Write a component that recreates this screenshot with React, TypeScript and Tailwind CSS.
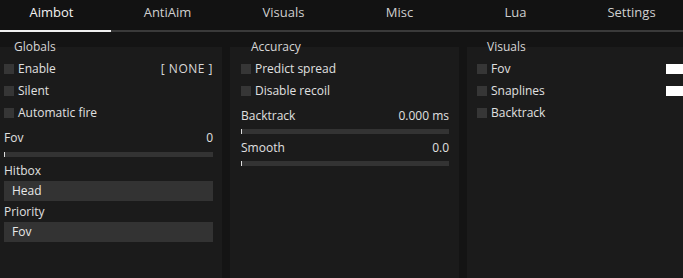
import React from "react";

const font = { fontFamily: '"Open Sans", "Noto Sans", sans-serif' };

function Check({ label, right }: { label: string; right?: React.ReactNode }) {
  return (
    <div className="flex h-[22px] items-center">
      <div className="h-[10px] w-[10px] bg-[#363636]" />
      <span className="ml-[4px] text-[12px] text-[#e0e0e0]">{label}</span>
      <div className="flex-1" />
      {right}
    </div>
  );
}

function Slider({ label, value, gap }: { label: string; value: string; gap: string }) {
  return (
    <div className="flex flex-col">
      <div className="flex h-[16px] items-center justify-between text-[12px] text-[#e0e0e0]">
        <span>{label}</span>
        <span>{value}</span>
      </div>
      <div className={"flex h-[5px] bg-[#333333] " + gap}>
        <div className="h-full w-[1px] bg-[#dcdcdc]" />
      </div>
    </div>
  );
}

function Combo({ label, value }: { label: string; value: string }) {
  return (
    <div className="flex flex-col">
      <div className="flex h-[16px] items-center text-[12px] text-[#e0e0e0]">{label}</div>
      <div className="mt-[2px] flex h-[20px] items-center bg-[#333333] pl-[8px] text-[12px] text-[#e8e8e8]">
        {value}
      </div>
    </div>
  );
}

export default function App() {
  const tabs = ["Aimbot", "AntiAim", "Visuals", "Misc", "Lua", "Settings"];
  return (
    <div className="flex h-[278px] w-[683px] flex-col overflow-hidden bg-[#141414]" style={font}>
      <div className="flex h-[30px] gap-[13px] bg-[#121212]">
        {tabs.map((t, i) => (
          <div
            key={t}
            className={
              "flex w-[104px] items-center justify-center pb-[4px] text-[13px] " +
              (i === 0 ? "text-[#f2f2f2]" : "text-[#cfcfcf]")
            }
          >
            {t}
          </div>
        ))}
      </div>
      <div className="flex h-[2px] bg-[#3a3a3a]">
        <div className="h-full w-[111px] bg-[#f0f0f0]" />
      </div>
      <div className="flex flex-1 gap-[8px] pt-[15px]">
        <div className="w-[222px] bg-[#1b1b1b] pl-[4px] pr-[9px]">
          <div className="-mt-[8px] ml-[10px] h-[16px] text-[12px] leading-[16px] text-[#d6d6d6]">Globals</div>
          <div className="mt-[3px]">
            <Check label="Enable" right={<span className="text-[12px] tracking-[0.5px] text-[#d8d8d8]">[ NONE ]</span>} />
            <Check label="Silent" />
            <Check label="Automatic fire" />
          </div>
          <div className="mt-[6px]">
            <Slider label="Fov" value="0" gap="mt-[6px]" />
          </div>
          <div className="mt-[6px]">
            <Combo label="Hitbox" value="Head" />
          </div>
          <div className="mt-[3px]">
            <Combo label="Priority" value="Fov" />
          </div>
        </div>
        <div className="w-[229px] bg-[#1b1b1b] pl-[11px] pr-[10px]">
          <div className="-mt-[8px] ml-[10px] h-[16px] text-[12px] leading-[16px] text-[#d6d6d6]">Accuracy</div>
          <div className="mt-[3px]">
            <Check label="Predict spread" />
            <Check label="Disable recoil" />
          </div>
          <div className="mt-[6px]">
            <Slider label="Backtrack" value="0.000 ms" gap="mt-[5px]" />
          </div>
          <div className="mt-[6px]">
            <Slider label="Smooth" value="0.0" gap="mt-[5px]" />
          </div>
        </div>
        <div className="flex-1 bg-[#1b1b1b] pl-[10px]">
          <div className="-mt-[8px] ml-[10px] h-[16px] text-[12px] leading-[16px] text-[#d6d6d6]">Visuals</div>
          <div className="mt-[3px]">
            <Check label="Fov" right={<div className="h-[10px] w-[17px] bg-white" />} />
            <Check label="Snaplines" right={<div className="h-[10px] w-[17px] bg-white" />} />
            <Check label="Backtrack" />
          </div>
        </div>
      </div>
    </div>
  );
}
